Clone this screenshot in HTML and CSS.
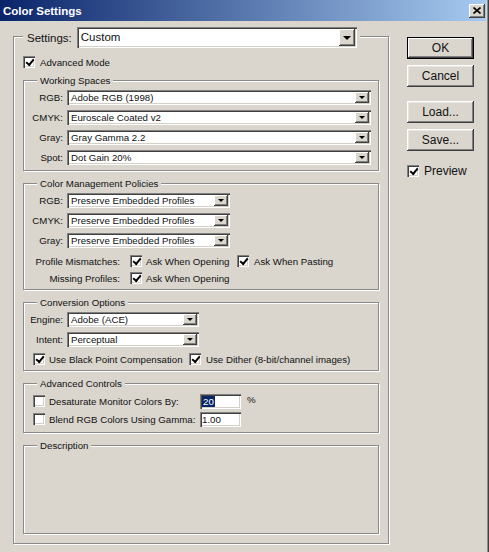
FILE: index.html
```html
<!DOCTYPE html>
<html lang="en">
<head>
<meta charset="UTF-8" />
<meta name="viewport" content="width=device-width, initial-scale=1" />
<title>Color Settings</title>
<link rel="stylesheet" href="styles.css">
</head>
<body>

<div class="window">
  <div class="titlebar">
    <span class="title">Color Settings</span>
    <span class="close">
      <svg width="8" height="7" viewBox="0 0 8 7"><path d="M0.5 0.5L7.5 6.5M7.5 0.5L0.5 6.5" stroke="#000" stroke-width="1.6" fill="none"/></svg>
    </span>
  </div>

  <div class="content">
    <div class="group outer">
      <div class="settings-head">
        <span class="settings-label">Settings:</span>
        <div class="select big"><span class="value">Custom</span><span class="drop"></span></div>
      </div>
      <div class="check-row adv-mode"><span class="cb on"></span><span class="cb-text">Advanced Mode</span></div>

      <div class="group ws">
        <div class="group-title">Working Spaces</div>
        <div class="field"><span class="lbl">RGB:</span><div class="select w-ws"><span class="value">Adobe RGB (1998)</span><span class="drop"></span></div></div>
        <div class="field"><span class="lbl">CMYK:</span><div class="select w-ws"><span class="value">Euroscale Coated v2</span><span class="drop"></span></div></div>
        <div class="field"><span class="lbl">Gray:</span><div class="select w-ws"><span class="value">Gray Gamma 2.2</span><span class="drop"></span></div></div>
        <div class="field"><span class="lbl">Spot:</span><div class="select w-ws"><span class="value">Dot Gain 20%</span><span class="drop"></span></div></div>
      </div>

      <div class="group cmp">
        <div class="group-title">Color Management Policies</div>
        <div class="field"><span class="lbl">RGB:</span><div class="select w-cmp"><span class="value">Preserve Embedded Profiles</span><span class="drop"></span></div></div>
        <div class="field"><span class="lbl">CMYK:</span><div class="select w-cmp"><span class="value">Preserve Embedded Profiles</span><span class="drop"></span></div></div>
        <div class="field"><span class="lbl">Gray:</span><div class="select w-cmp"><span class="value">Preserve Embedded Profiles</span><span class="drop"></span></div></div>
        <div class="policy-row first">
          <span class="plbl">Profile Mismatches:</span>
          <span class="cb on"></span><span class="ptext">Ask When Opening</span>
          <span class="cb on"></span><span class="cb-text">Ask When Pasting</span>
        </div>
        <div class="policy-row">
          <span class="plbl">Missing Profiles:</span>
          <span class="cb on"></span><span class="ptext">Ask When Opening</span>
        </div>
      </div>

      <div class="group conv">
        <div class="group-title">Conversion Options</div>
        <div class="field"><span class="lbl">Engine:</span><div class="select w-conv"><span class="value">Adobe (ACE)</span><span class="drop"></span></div></div>
        <div class="field"><span class="lbl">Intent:</span><div class="select w-conv"><span class="value">Perceptual</span><span class="drop"></span></div></div>
        <div class="check-line">
          <span class="cb on"></span><span class="ctext">Use Black Point Compensation</span>
          <span class="cb on"></span><span class="cb-text">Use Dither (8-bit/channel images)</span>
        </div>
      </div>

      <div class="group advc">
        <div class="group-title">Advanced Controls</div>
        <div class="adv-row first">
          <span class="cb"></span><span class="adv-lbl">Desaturate Monitor Colors By:</span>
          <span class="input"><span class="selected">20</span></span><span class="unit">%</span>
        </div>
        <div class="adv-row">
          <span class="cb"></span><span class="adv-lbl">Blend RGB Colors Using Gamma:</span>
          <span class="input">1.00</span>
        </div>
      </div>

      <div class="group desc">
        <div class="group-title">Description</div>
      </div>
    </div>

    <div class="side">
      <button class="btn default">OK</button>
      <button class="btn cancel">Cancel</button>
      <button class="btn load">Load...</button>
      <button class="btn save">Save...</button>
      <div class="check-row preview"><span class="cb on"></span><span class="cb-text">Preview</span></div>
    </div>
  </div>
</div>

</body>
</html>
```

FILE: styles.css
```css
* {
  box-sizing: border-box;
}
body {
  margin: 0;
  background: #dad6ce;
  font-family: "Liberation Sans", Arial, sans-serif;
  font-size: 9.7px;
  color: #111;
}
.window {
  width: 489px;
  height: 552px;
  background: #dad6ce;
  padding-right: 3px;
  box-shadow: inset -1px 0 #404040, inset -2px 0 #8c8c8c;
}

/* title bar */
.titlebar {
  height: 21px;
  display: flex;
  align-items: center;
  justify-content: space-between;
  padding: 0 1px 0 3px;
  background: linear-gradient(to right, #0a246a, #a6caf0);
}
.title {
  color: #fff;
  font-weight: bold;
  font-size: 11.5px;
}
.close {
  width: 16px;
  height: 14px;
  display: flex;
  align-items: center;
  justify-content: center;
  background: #dad6ce;
  box-shadow: inset -1px -1px #404040, inset 1px 1px #fff, inset -2px -2px #808080;
}

.content {
  display: flex;
  padding: 15px 0 0 13px;
}

/* etched group boxes */
.group {
  border: 1px solid #8a8a8a;
  box-shadow: inset 1px 1px #fff, 1px 1px #fff;
  display: flex;
  flex-direction: column;
  align-items: flex-start;
  margin-top: 12px;
}
.group-title {
  margin: -6px 0 -2px 13px;
  padding: 0 3px;
  line-height: 12px;
  height: 12px;
  background: #dad6ce;
}
.outer {
  width: 376px;
  height: 508px;
  margin-top: 0;
  padding: 0 9px 9px;
}
.ws, .cmp, .conv, .advc, .desc {
  width: 356px;
}
.ws { padding-bottom: 5px; }
.cmp, .conv, .advc { padding-bottom: 5px; }
.desc { flex: 1; }

.settings-head {
  display: flex;
  align-items: center;
  margin-top: -10px;
  padding: 0 3px 0 4px;
  background: #dad6ce;
}
.settings-label {
  font-size: 11.5px;
  margin-right: 5px;
}

/* controls */
.select {
  display: flex;
  align-items: center;
  height: 15px;
  padding: 2px;
  background: #fff;
  box-shadow: inset 1px 1px #808080, inset 2px 2px #404040, inset -1px -1px #fff, inset -2px -2px #d4d0c8;
}
.select .value {
  flex: 1;
  padding-left: 2px;
  line-height: 11px;
  white-space: nowrap;
}
.drop {
  width: 14px;
  height: 11px;
  display: flex;
  align-items: center;
  justify-content: center;
  background: #dad6ce;
  box-shadow: inset -1px -1px #404040, inset 1px 1px #fff, inset -2px -2px #808080;
}
.drop::after {
  content: "";
  border-left: 3px solid transparent;
  border-right: 3px solid transparent;
  border-top: 3px solid #000;
}
.select.big {
  width: 280px;
  height: 21px;
  font-size: 11.5px;
}
.select.big .drop {
  width: 16px;
  height: 17px;
}
.select.big .drop::after {
  border-left-width: 4px;
  border-right-width: 4px;
  border-top-width: 4px;
}
.w-ws { width: 304px; }
.w-cmp { width: 163px; }
.w-conv { width: 132px; }

.field {
  display: flex;
  align-items: center;
  margin-top: 5px;
}
.lbl {
  width: 39px;
  margin-right: 4px;
  text-align: right;
}

.cb {
  position: relative;
  width: 12px;
  height: 12px;
  flex: none;
  background: #fff;
  box-shadow: inset 1px 1px #808080, inset 2px 2px #404040, inset -1px -1px #fff, inset -2px -2px #d4d0c8;
}
.cb.on::after {
  content: "";
  position: absolute;
  left: 3px;
  top: 2.5px;
  width: 6px;
  height: 3px;
  border-left: 2px solid #000;
  border-bottom: 2px solid #000;
  transform: rotate(-50deg);
}
.cb-text {
  margin-left: 5px;
  white-space: nowrap;
}
.check-row {
  display: flex;
  align-items: center;
}
.adv-mode {
  margin-top: 8px;
}

.policy-row {
  display: flex;
  align-items: center;
  margin-top: 5px;
}
.policy-row.first { margin-top: 7px; }
.plbl {
  width: 96px;
  margin-right: 10px;
  text-align: right;
  white-space: nowrap;
}
.ptext {
  width: 95px;
  padding-left: 4px;
  white-space: nowrap;
}

.check-line {
  display: flex;
  align-items: center;
  margin-top: 6px;
  padding-left: 9px;
}
.ctext {
  width: 144px;
  padding-left: 4px;
  white-space: nowrap;
}

.adv-row {
  display: flex;
  align-items: center;
  height: 16px;
  margin-top: 2px;
  padding-left: 9px;
}
.adv-row.first { margin-top: 5px; }
.adv-lbl {
  width: 155px;
  padding-left: 4px;
  white-space: nowrap;
}
.input {
  width: 41px;
  height: 15px;
  padding: 2px 2px 0;
  line-height: 12px;
  background: #fff;
  box-shadow: inset 1px 1px #808080, inset 2px 2px #404040, inset -1px -1px #fff, inset -2px -2px #d4d0c8;
}
.selected {
  background: #0a246a;
  color: #fff;
  padding: 0 1px;
}
.unit {
  margin-left: 6px;
  margin-top: -4px;
}

/* right column */
.side {
  display: flex;
  flex-direction: column;
  align-items: flex-start;
  margin-left: 18px;
  padding-top: 1px;
}
.btn {
  width: 67px;
  height: 22px;
  padding: 0;
  border: none;
  background: #dad6ce;
  font-family: "Liberation Sans", Arial, sans-serif;
  font-size: 12px;
  color: #111;
  box-shadow: inset -1px -1px #404040, inset 1px 1px #fff, inset -2px -2px #808080, inset 2px 2px #e8e6e0;
}
.btn.default {
  box-shadow: inset 0 0 0 1px #000, inset -2px -2px #404040, inset 2px 2px #fff, inset -3px -3px #808080;
}
.cancel { margin-top: 6px; }
.load { margin-top: 14px; }
.save { margin-top: 6px; }
.preview {
  margin-top: 13px;
  font-size: 12px;
}
```
